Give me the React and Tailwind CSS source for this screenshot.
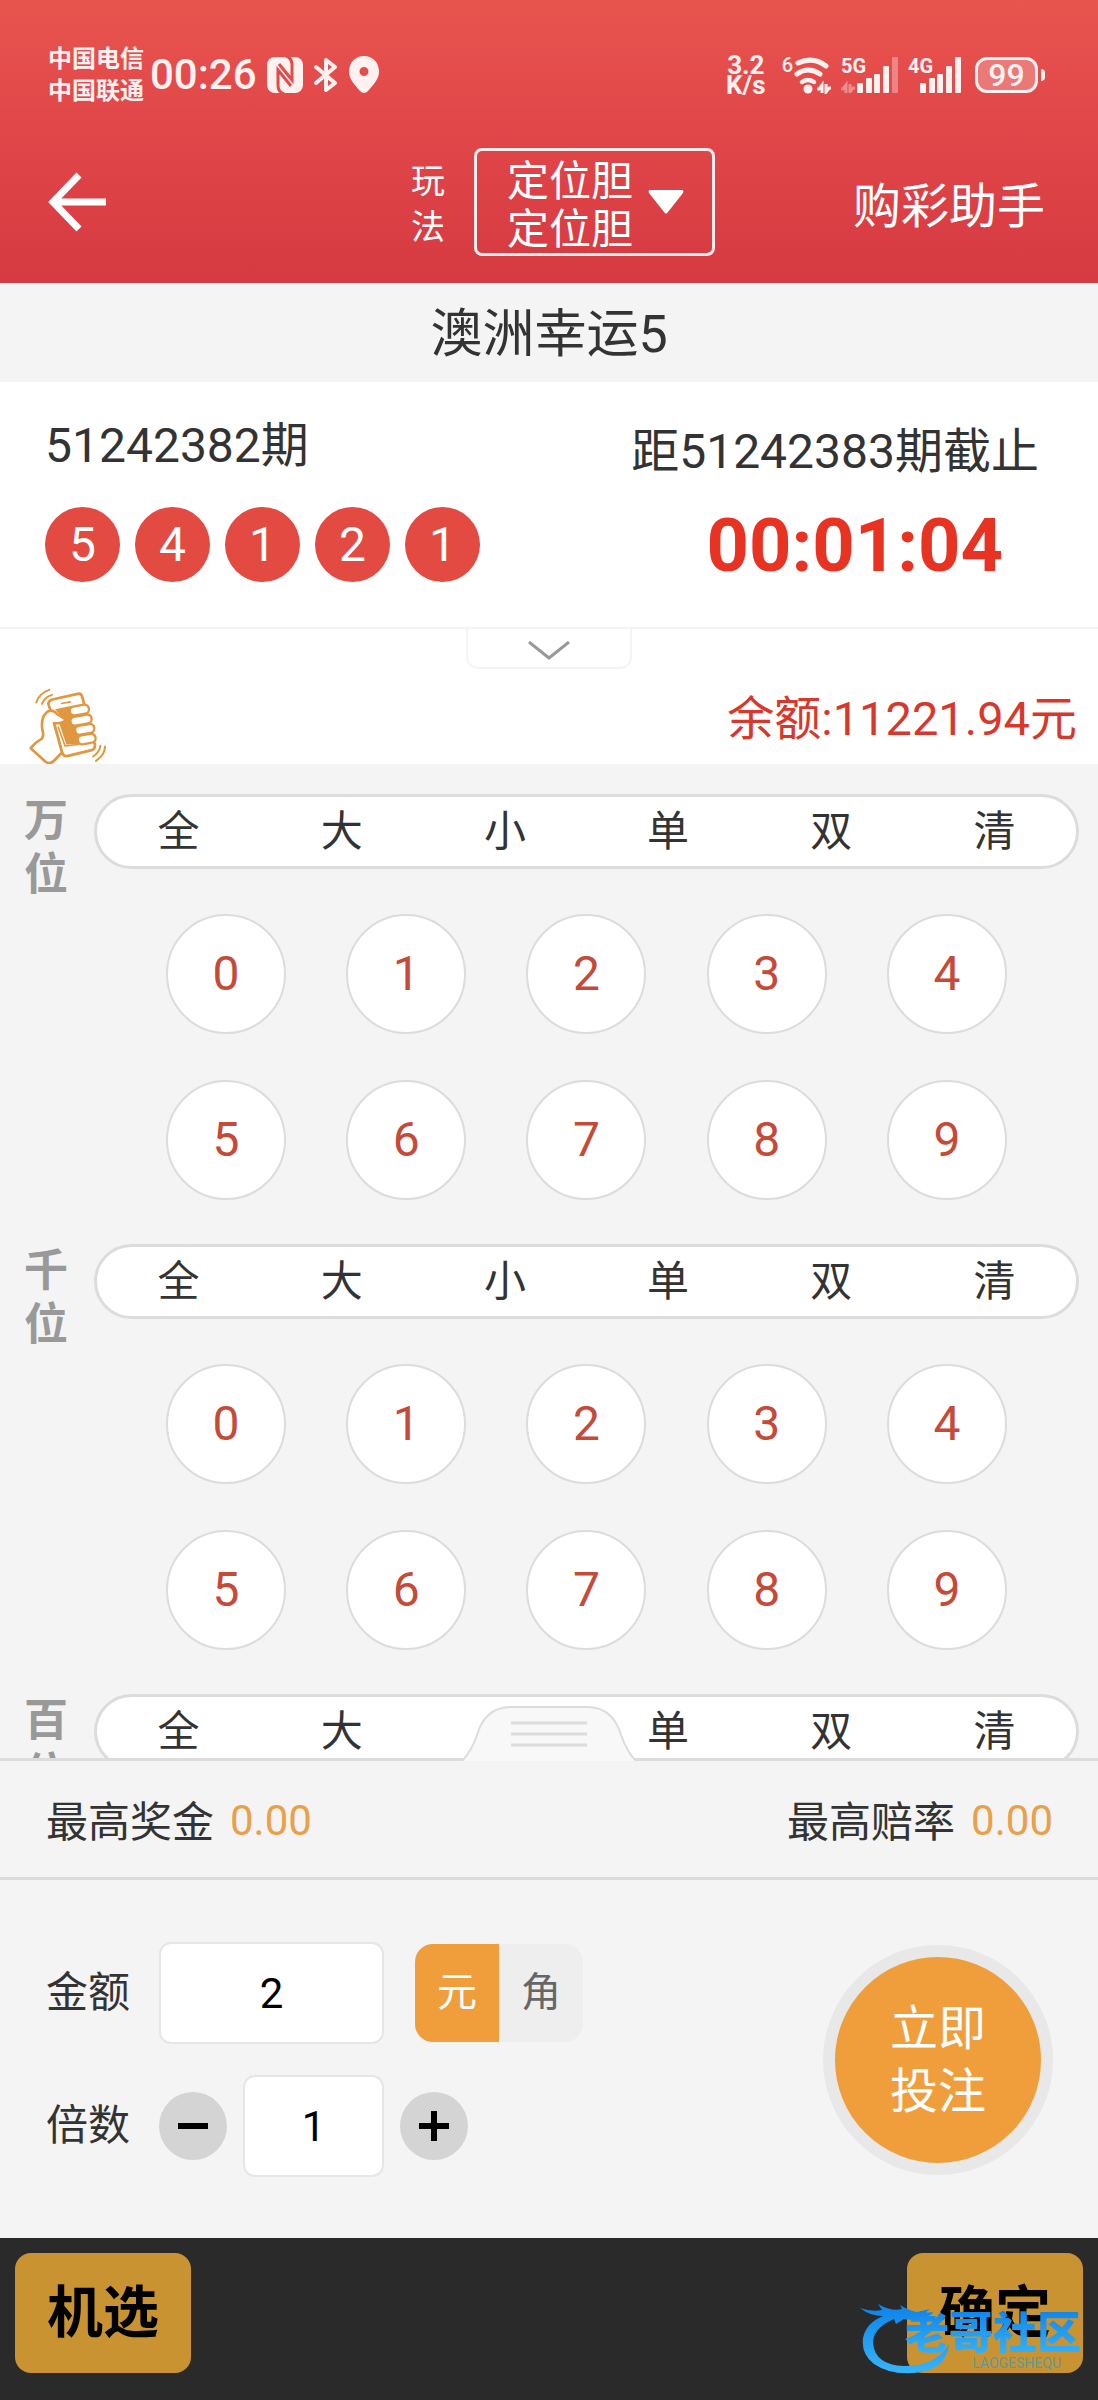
import { useState } from 'react';

const QUICK_PICKS = ['全', '大', '小', '单', '双', '清'];
const DIGITS = [0, 1, 2, 3, 4, 5, 6, 7, 8, 9];
const POSITIONS = ['万位', '千位', '百位'];
const LAST_DRAW = [5, 4, 1, 2, 1];

// Latin and digits in Roboto by default, all-Chinese headings use the CJK face first
const LATIN = "[font-family:Roboto,'Noto_Sans_CJK_SC',sans-serif]";
const CJK = "[font-family:'Noto_Sans_CJK_SC',sans-serif]";

/* ---------- icons ---------- */

const NfcIcon = () => (
  <svg width="36" height="36" viewBox="0 0 36 36">
    <rect width="36" height="36" rx="8" fill="#fff1f0" />
    <path d="M17 37 Q11 35 11 28 V13 L24 29" fill="none" stroke="#e44a49" strokeWidth="3" />
    <path d="M19 -1 Q25 1 25 8 V23 L12 7" fill="none" stroke="#e44a49" strokeWidth="3" />
  </svg>
);

const BluetoothIcon = () => (
  <svg width="26" height="36" viewBox="0 0 26 36" fill="none" stroke="#fff1f0" strokeWidth="4" strokeLinejoin="round" strokeLinecap="round">
    <path d="M3 10 L22 26 L13 33 V3 L22 10 L3 26" />
  </svg>
);

const PinIcon = () => (
  <svg width="30" height="38" viewBox="1 0 30 38" fill="#fff1f0">
    <path fillRule="evenodd" d="M16 0 C7 0 1 7 1 15.500 C1 23 6 28 12 35 Q16 39 20 35 C26 28 31 23 31 15.500 C31 7 25 0 16 0Z M16 11 A4.500 4.500 0 1 1 16 20 A4.500 4.500 0 1 1 16 11Z" />
  </svg>
);

const WifiIcon = () => (
  <svg width="38" height="37" viewBox="0 0 38 37" fill="none" stroke="#fff1f0" strokeWidth="5" strokeLinecap="round">
    <path d="M5 6 Q20 -1 33 9" />
    <path d="M4 17 Q15 9 27 17" />
    <path strokeWidth="4.500" d="M9 25 Q15 21 21 25" />
    <circle cx="15" cy="32" r="4.500" fill="#fff1f0" stroke="none" />
    <path strokeWidth="3" strokeLinecap="butt" d="M24 32 H26 L29 28 V36 M33 27 V35 L36 31 H38" />
  </svg>
);

const SignalBars = ({ label, faded }) => (
  <div className="relative">
    <svg width={faded ? 57 : 53} height="36" viewBox={faded ? '0 0 57 36' : '4 0 53 36'} fill="#fff1f0">
      {faded && <path d="M0 32 H2 L5 28 V36 M9 27 V35 L12 31 H14" fill="none" stroke="#fff1f0" strokeWidth="3" opacity="0.4" />}
      <rect x="16" y="26" width="6" height="10" rx="1" />
      <rect x="25" y="21" width="6" height="15" rx="1" />
      <rect x="33" y="17" width="6" height="19" rx="1" />
      <rect x="42" y="9" width="6" height="27" rx="1" />
      <rect x="51" y="0" width="6" height="36" rx="1" opacity={faded ? 0.35 : 1} />
    </svg>
    <span className="absolute left-0 top-0 text-xl leading-[18px] font-bold">{label}</span>
  </div>
);

const ShakeIcon = () => (
  <svg width="80" height="76" viewBox="85 145 240 227" fill="none" stroke="#e0973f" strokeWidth="8" strokeLinecap="round" strokeLinejoin="round">
    <path d="M151 207 L146 192 Q147 182 158 179 L234 162 Q244 160 247 169 L286 316 Q286 328 276 331 L205 348 Q191 351 187 338 L163 250" />
    <path strokeWidth="5" d="M186 191 L212 186" />
    <path d="M166 208 L216 198 L240 312 L200 314 L180 255 L195 240Z" fill="#e0973f" stroke="none" />
    <path strokeWidth="5" d="M176 262 L196 318 L236 314" />
    <path d="M93 325 Q110 305 126 297 Q134 288 128 270 Q122 228 146 214 Q160 208 172 222 L198 239 Q194 252 163 250 L187 338 L164 362 Q150 376 137 365Z" fill="#fff" />
    <g fill="#fff" strokeWidth="7">
      <rect x="210" y="197" width="58" height="27" rx="13" transform="rotate(-10 240 210)" />
      <rect x="212" y="227" width="64" height="27" rx="13" transform="rotate(-10 246 240)" />
      <rect x="226" y="255" width="58" height="27" rx="13" transform="rotate(-10 256 268)" />
      <rect x="234" y="284" width="54" height="27" rx="13" transform="rotate(-10 262 298)" />
    </g>
    <g strokeWidth="6">
      <path d="M110 188 Q118 160 149 150" />
      <path d="M127 192 Q134 172 157 165" />
      <path d="M316 320 Q316 345 289 363" />
      <path d="M302 318 Q300 337 280 350" />
    </g>
  </svg>
);

const DragonMark = () => (
  <svg width="94" height="70" viewBox="0 0 94 70">
    <defs>
      <linearGradient id="dragon" x1="0" y1="0" x2="0" y2="1">
        <stop offset="0" stopColor="#0b83ea" />
        <stop offset="1" stopColor="#38b4f6" />
      </linearGradient>
    </defs>
    <path
      fill="url(#dragon)"
      d="M0 4 Q11 8 22 6 L18 0 Q32 8 42 5 L40 1 Q50 7 57 8 L70 5 L65 9 L73 8 Q72 13 62 12 L71 15 Q64 20 53 16 L44 15 L36 20 L34 15 Q13 24 13 39 Q15 61 44 62 Q76 62 89 40 Q86 67 54 69 Q30 71 14 60 Q1 50 3 34 Q6 19 23 12 Q10 12 0 4Z"
    />
  </svg>
);

/* ---------- sections ---------- */

const StatusBar = () => (
  <div className="flex h-16 items-center pl-12 pr-[53px] text-[#fff1f0]">
    <div className="text-2xl leading-8 font-bold">
      <p>中国电信</p>
      <p>中国联通</p>
    </div>
    <span className="ml-1.5 mr-2.5 text-[42px] leading-none font-medium">00:26</span>
    <div className="flex items-center gap-2.5">
      <NfcIcon />
      <BluetoothIcon />
      <PinIcon />
    </div>
    <div className="ml-auto flex items-center">
      <div className="mr-4 text-center text-[26px] leading-5 font-bold">
        <p>3.2</p>
        <p>K/s</p>
      </div>
      <span className="self-start text-xl leading-5 font-medium">6</span>
      <WifiIcon />
      <div className="ml-2.5 mr-3.5 flex gap-2.5">
        <SignalBars label="5G" faded />
        <SignalBars label="4G" />
      </div>
      <div className="flex items-center gap-[3px]">
        <span className="flex h-9 w-[63px] items-center justify-center rounded-xl border-[3px] border-[#fff1f0] bg-white/25 text-[32px] leading-none font-medium">
          99
        </span>
        <span className="h-3 w-1 rounded-r bg-[#fff1f0]" />
      </div>
    </div>
  </div>
);

const NavBar = () => (
  <div className={`mt-[41px] flex items-center pl-12 pr-[53px] text-white ${CJK}`}>
    <button aria-label="返回">
      <svg width="58" height="60" viewBox="0 0 58 60" fill="none" stroke="currentColor" strokeWidth="7">
        <path d="M31 3 L5 30 L31 57 M4 30 H58" />
      </svg>
    </button>
    <div className="ml-auto flex items-center gap-7">
      <span className="w-9 text-center text-[34px] leading-[46px]">玩法</span>
      <button className="flex h-[108px] w-[241px] items-center justify-between rounded-lg border-[3px] border-white/90 pl-[30px] pr-7 text-[42px] leading-12">
        <span className="text-left">
          定位胆
          <br />
          定位胆
        </span>
        <svg width="36" height="24" viewBox="0 0 36 24" fill="currentColor">
          <path d="M2 0 H34 Q36 0 35 3 L20 22 Q18 25 16 22 L1 3 Q0 0 2 0Z" />
        </svg>
      </button>
    </div>
    <a href="#helper" className="ml-[138px] text-5xl leading-none">购彩助手</a>
  </div>
);

const DrawInfo = () => (
  <section className="flex justify-between border-b-2 border-[#f4f4f4] pb-[41px] pl-[45px] pr-[59px] pt-[34px]">
    <div>
      <p className="text-5xl leading-[60px]">51242382期</p>
      <div className="mt-[31px] flex gap-[15px]">
        {LAST_DRAW.map((n, i) => (
          <span key={i} className="flex size-[75px] items-center justify-center rounded-full bg-[#e24a42] text-5xl leading-none text-white">
            {n}
          </span>
        ))}
      </div>
    </div>
    <div className="pt-1.5 text-right">
      <p className="text-5xl leading-[60px]">距51242383期截止</p>
      <p className="pr-9 pt-6 text-[74px] leading-[80px] font-bold text-[#e83323]">00:01:04</p>
    </div>
  </section>
);

const BetPosition = ({ name, picked, onToggle }) => (
  <section className="flex h-[450px] gap-[26px] pl-6 pr-[19px]">
    <h2 className="w-11 shrink-0 text-[44px] leading-[54px] font-bold text-[#999]">{name}</h2>
    <div className="flex-1">
      <div className="grid h-[75px] grid-cols-6 rounded-full border-[3px] border-[#dcdcdc] bg-white text-[42px] leading-none">
        {QUICK_PICKS.map((q) => (
          <button key={q}>{q}</button>
        ))}
      </div>
      <div className="mt-[45px] grid grid-cols-5 gap-y-[46px] px-[42px]">
        {DIGITS.map((d) => (
          <button
            key={d}
            onClick={() => onToggle(name + d)}
            className={`size-30 justify-self-center rounded-full border-2 text-5xl leading-none ${
              picked.includes(name + d) ? 'border-[#c9482f] bg-[#c9482f] text-white' : 'border-[#dcdcdc] bg-white text-[#c54a38]'
            }`}
          >
            {d}
          </button>
        ))}
      </div>
    </div>
  </section>
);

const StepButton = ({ label, plus, onClick }) => (
  <button aria-label={label} onClick={onClick} className="flex size-[68px] items-center justify-center rounded-full bg-[#d4d4d4]">
    <svg width="30" height="30" viewBox="0 0 30 30" stroke="#000" strokeWidth="6">
      <path d={plus ? 'M0 15 H30 M15 0 V30' : 'M0 15 H30'} />
    </svg>
  </button>
);

const Stat = ({ label, value }) => (
  <p className={`flex items-center gap-4 ${CJK}`}>
    {label} <span className={`pt-1 text-[#e9a04a] ${LATIN}`}>{value}</span>
  </p>
);

const BetPanel = () => {
  const [amount, setAmount] = useState('2');
  const [times, setTimes] = useState(1);
  const [unit, setUnit] = useState('元');

  return (
    <section className="relative border-t-[3px] border-[#dcdcdc]">
      <button aria-label="展开" className="absolute bottom-full left-1/2 -translate-x-1/2">
        <svg width="176" height="55" viewBox="0 0 176 55" className="block">
          <path d="M1 55 Q10 46 16 29 Q24 2 48 1 H128 Q152 2 160 29 Q166 46 175 55" fill="#f8f8f8" stroke="#dcdcdc" strokeWidth="2" />
          <path d="M50 17 H126 M50 28 H126 M50 39 H126" stroke="#dcdcdc" strokeWidth="3" />
        </svg>
      </button>

      <div className="flex h-[119px] items-center justify-between border-b-[3px] border-[#dcdcdc] pl-[46px] pr-[45px] text-[42px] leading-none">
        <Stat label="最高奖金" value="0.00" />
        <Stat label="最高赔率" value="0.00" />
      </div>

      <div className="flex items-center justify-between pb-[61px] pl-[46px] pr-[45px] pt-[62px] text-[42px] leading-none">
        <div className="flex flex-col gap-[31px]">
          <div className="flex items-center">
            <label htmlFor="amount" className="w-[113px]">金额</label>
            <input
              id="amount"
              value={amount}
              onChange={(e) => setAmount(e.target.value)}
              className="h-[102px] w-[225px] rounded-xl border-2 border-[#e6e6e6] bg-white text-center text-black"
            />
            <div className="ml-[31px] flex h-[98px] overflow-hidden rounded-[18px] bg-[#eee]">
              {['元', '角'].map((u) => (
                <button
                  key={u}
                  onClick={() => setUnit(u)}
                  className={`w-[84px] text-[40px] leading-none ${unit === u ? 'bg-[#f09e3c] text-white' : 'text-[#666]'}`}
                >
                  {u}
                </button>
              ))}
            </div>
          </div>
          <div className="flex items-center">
            <label htmlFor="times" className="w-[113px]">倍数</label>
            <StepButton label="减少" onClick={() => setTimes(Math.max(1, times - 1))} />
            <input
              id="times"
              value={times}
              onChange={(e) => setTimes(Number(e.target.value) || 1)}
              className="mx-4 h-[102px] w-[141px] rounded-xl border-2 border-[#e6e6e6] bg-white text-center text-black"
            />
            <StepButton label="增加" plus onClick={() => setTimes(times + 1)} />
          </div>
        </div>
        <button className="size-[230px] rounded-full border-12 border-[#e8e8e8] bg-[#f09e3c] text-5xl leading-[63px] text-white">
          立即
          <br />
          投注
        </button>
      </div>
    </section>
  );
};

const Footer = () => (
  <footer className="flex justify-between bg-[#2a2a2a] px-[15px] pb-[27px] pt-[15px] text-[56px] leading-none font-bold text-black">
    <button className="h-[120px] w-44 rounded-2xl bg-[#c99332]">机选</button>
    <div className="relative">
      <button className="h-[120px] w-44 rounded-2xl bg-[#c99332]">确定</button>
      <div className="pointer-events-none absolute -bottom-px right-[129px]">
        <DragonMark />
      </div>
      <div className="pointer-events-none absolute bottom-1 right-0.5 flex flex-col items-end whitespace-nowrap">
        <span className="bg-gradient-to-b from-[#1186ea] to-[#38b4f6] bg-clip-text text-[44px] leading-[46px] font-black text-transparent">
          老哥社区
        </span>
        <span className="pr-5 text-sm leading-3 font-normal text-[#5f97a0]">LAOGESHEQU</span>
      </div>
    </div>
  </footer>
);

const App = () => {
  const [picked, setPicked] = useState([]);

  const toggle = (key) => {
    setPicked((prev) => (prev.includes(key) ? prev.filter((k) => k !== key) : [...prev, key]));
  };

  return (
    <div className={`flex h-screen flex-col bg-[#f4f4f4] text-[#333] ${LATIN}`}>
      <header className="bg-gradient-to-b from-[#e8544e] via-[#e04548] to-[#d63a42] pb-[27px] pt-[43px]">
        <StatusBar />
        <NavBar />
      </header>

      <h1 className="pb-[18px] pt-[22px] text-center text-[52px] leading-[59px]">澳洲幸运5</h1>

      <div className="bg-white">
        <DrawInfo />
        <div className="relative flex h-[135px] items-end justify-between pl-7 pr-[21px]">
          <button aria-label="展开历史开奖" className="absolute left-1/2 top-0 flex h-10 w-[166px] -translate-x-1/2 justify-center rounded-b-xl border-2 border-t-0 border-[#f4f4f4] pt-3">
            <svg width="44" height="20" viewBox="0 0 44 20" fill="none" stroke="#999" strokeWidth="3">
              <path d="M2 1 L22 17 L42 1" />
            </svg>
          </button>
          <button aria-label="摇一摇">
            <ShakeIcon />
          </button>
          <p className="pb-[18px] text-[47px] leading-[54px] text-[#d8382c]">余额:11221.94元</p>
        </div>
      </div>

      <main className="min-h-0 flex-1 overflow-y-auto pt-[30px] [scrollbar-width:none]">
        {POSITIONS.map((name) => (
          <BetPosition key={name} name={name} picked={picked} onToggle={toggle} />
        ))}
      </main>

      <BetPanel />
      <Footer />
    </div>
  );
};

export default App;
